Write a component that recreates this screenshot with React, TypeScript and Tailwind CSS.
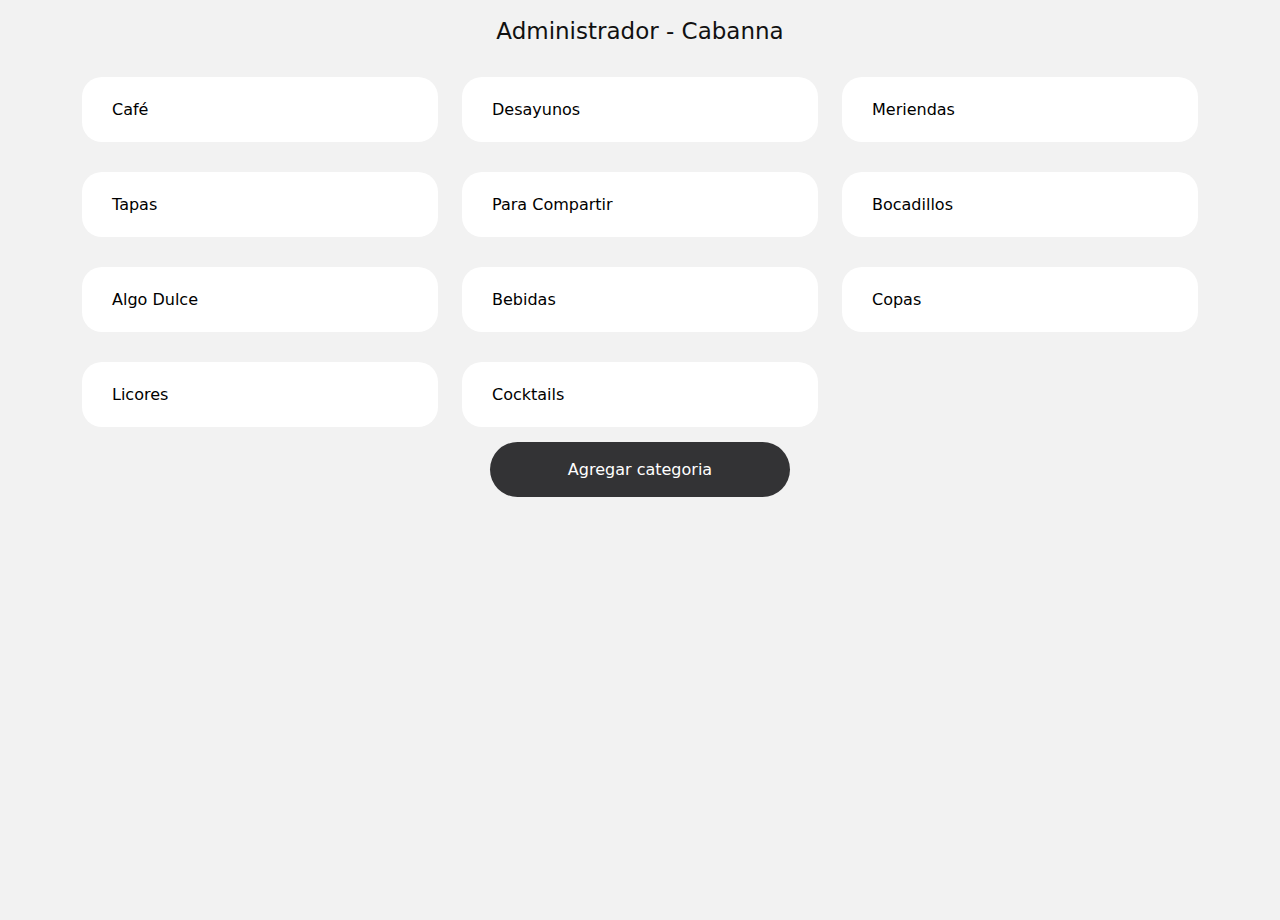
const categories = [
  "Café",
  "Desayunos",
  "Meriendas",
  "Tapas",
  "Para Compartir",
  "Bocadillos",
  "Algo Dulce",
  "Bebidas",
  "Copas",
  "Licores",
  "Cocktails",
];

export default function App() {
  return (
    <div className="min-h-[920px] bg-[#f2f2f2] font-['DejaVu_Sans',sans-serif] text-black">
      <h1 className="pt-[15px] text-center text-[23px] leading-[33px] font-normal text-[#111]">
        Administrador - Cabanna
      </h1>

      {/* Categories */}
      <div className="mt-[29px] grid grid-cols-3 gap-x-6 gap-y-[30px] px-[82px]">
        {categories.map((c) => (
          <div
            key={c}
            className="flex h-[65px] items-center rounded-[20px] bg-white pl-[30px] pt-px text-[16px]"
          >
            {c}
          </div>
        ))}
      </div>

      <div className="mt-[15px] flex justify-center">
        <button className="h-[55px] w-[300px] rounded-full bg-[#333335] pt-px text-[16px] font-normal text-white">
          Agregar categoria
        </button>
      </div>
    </div>
  );
}
